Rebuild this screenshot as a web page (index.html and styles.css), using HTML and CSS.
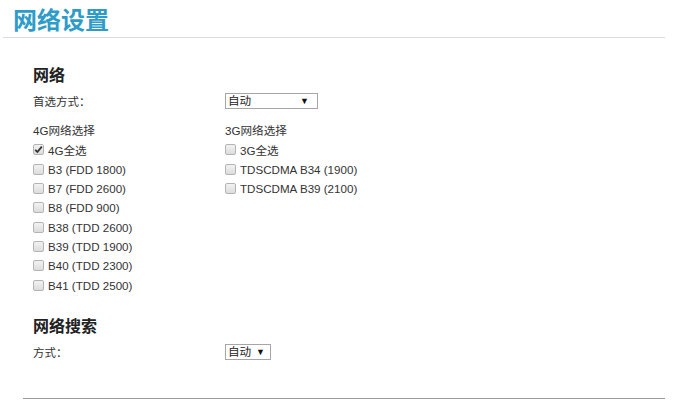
FILE: index.html
```html
<!DOCTYPE html>
<html lang="zh">
<head>
<meta charset="utf-8">
<link rel="stylesheet" href="styles.css">
</head>
<body>
<div class="header"><h1 class="title">网络设置</h1></div>
<div class="content">
  <h2 class="section">网络</h2>
  <div class="field">
    <span class="label">首选方式：</span>
    <div class="select wide"><span>自动</span><span class="arrow">▼</span></div>
  </div>
  <div class="columns">
    <div class="col">
      <div class="colhead">4G网络选择</div>
      <div class="row"><span class="box checked"><svg width="9" height="9" viewBox="0 0 9 9"><path d="M1.2 4.8 L3.4 7 L7.8 1.6" fill="none" stroke="#333" stroke-width="1.8"/></svg></span>4G全选</div>
      <div class="row"><span class="box"></span>B3 (FDD 1800)</div>
      <div class="row"><span class="box"></span>B7 (FDD 2600)</div>
      <div class="row"><span class="box"></span>B8 (FDD 900)</div>
      <div class="row"><span class="box"></span>B38 (TDD 2600)</div>
      <div class="row"><span class="box"></span>B39 (TDD 1900)</div>
      <div class="row"><span class="box"></span>B40 (TDD 2300)</div>
      <div class="row"><span class="box"></span>B41 (TDD 2500)</div>
    </div>
    <div class="col">
      <div class="colhead">3G网络选择</div>
      <div class="row"><span class="box"></span>3G全选</div>
      <div class="row"><span class="box"></span>TDSCDMA B34 (1900)</div>
      <div class="row"><span class="box"></span>TDSCDMA B39 (2100)</div>
    </div>
  </div>
  <h2 class="section search">网络搜索</h2>
  <div class="field">
    <span class="label">方式：</span>
    <div class="select narrow"><span>自动</span><span class="arrow">▼</span></div>
  </div>
</div>
<div class="footer"></div>
</body>
</html>
```

FILE: styles.css
```css
body {
  margin: 0;
  background: #fff;
  font-family: "Liberation Sans", "Noto Sans CJK SC", sans-serif;
  font-size: 11.6px;
  color: #333;
}
.header {
  margin: 0 16px 0 3px;
  height: 38px;
  border-bottom: 1px solid #dcdcdc;
  padding-left: 10px;
  box-sizing: border-box;
}
.title {
  margin: 0;
  padding-top: 5px;
  font-size: 24px;
  line-height: 28px;
  font-weight: bold;
  color: #2e9cc8;
  font-family: "Noto Sans CJK SC", sans-serif;
}
.content {
  padding-left: 33px;
}
.section {
  margin: 0;
  font-size: 16px;
  line-height: 20px;
  font-weight: bold;
  color: #222;
  font-family: "Noto Sans CJK SC", sans-serif;
  padding-top: 26px;
}
.section.search {
  padding-top: 20px;
}
.field {
  display: grid;
  grid-template-columns: 192px auto;
  align-items: center;
  margin-top: 9px;
  height: 16px;
}
.label {
  line-height: 16px;
  font-family: "Noto Sans CJK SC", sans-serif;
  font-size: 11.5px;
  text-spacing-trim: space-all;
}
.select {
  display: flex;
  align-items: center;
  justify-content: space-between;
  box-sizing: border-box;
  height: 16px;
  border: 1px solid #a6a6a6;
  padding: 0 8px 0 2px;
  line-height: 14px;
  color: #222;
}
.select.wide { width: 93px; }
.select.narrow { width: 46px; padding-right: 5px; }
.arrow {
  font-size: 9px;
  color: #111;
  line-height: 14px;
}
.columns {
  display: grid;
  grid-template-columns: 192px auto;
  margin-top: 12px;
}
.colhead {
  height: 19.3px;
  line-height: 19px;
}
.row {
  display: flex;
  align-items: center;
  height: 19.3px;
  white-space: nowrap;
}
.box {
  width: 11px;
  height: 11px;
  box-sizing: border-box;
  border: 1px solid #b4b4b4;
  border-radius: 2px;
  background: linear-gradient(#f2f2f2, #dcdcdc);
  margin-right: 4px;
  display: flex;
  align-items: center;
  justify-content: center;
  flex: none;
}
.box svg { display: block; }
.footer {
  margin: 38px 16px 0 23px;
  border-top: 1px solid #9a9a9a;
}
```
